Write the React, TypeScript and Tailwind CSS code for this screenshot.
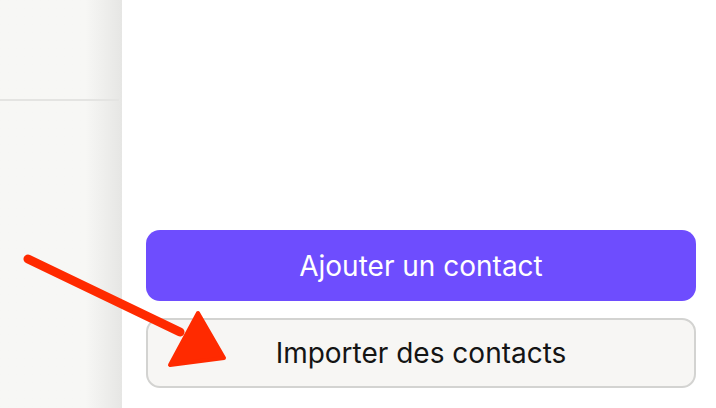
import React from "react";

const Arrow = () => (
  <svg
    className="pointer-events-none absolute left-0 top-0"
    width="716"
    height="408"
    viewBox="0 0 716 408"
  >
    <path
      d="M28 259 L180 332"
      stroke="#ff2a00"
      strokeWidth="9"
      strokeLinecap="round"
      fill="none"
    />
    <path d="M198 313 L170 365 L224 358 Z" fill="#ff2a00" stroke="#ff2a00" strokeWidth="4" strokeLinejoin="round" />
  </svg>
);

export default function App() {
  return (
    <div className="relative flex h-[408px] w-[716px] overflow-hidden bg-white font-['Inter',sans-serif]">
      <div className="flex w-[122px] shrink-0 flex-col bg-gradient-to-r from-[#f7f7f5] from-70% to-[#e6e6e4]">
        <div className="mr-[3px] h-[101px] border-b-2 border-[#e4e4e2]" />
      </div>
      <div className="flex flex-1 flex-col justify-end gap-[17px] pb-5 pl-6 pr-5">
        <button className="h-[71px] w-full rounded-[14px] bg-[#6e4dfe] text-[28px] text-white">
          Ajouter un contact
        </button>
        <button className="h-[70px] w-full rounded-[14px] border-2 border-[#d3d3d1] bg-[#f7f6f4] text-[28px] text-[#141414]">
          Importer des contacts
        </button>
      </div>
      <Arrow />
    </div>
  );
}
